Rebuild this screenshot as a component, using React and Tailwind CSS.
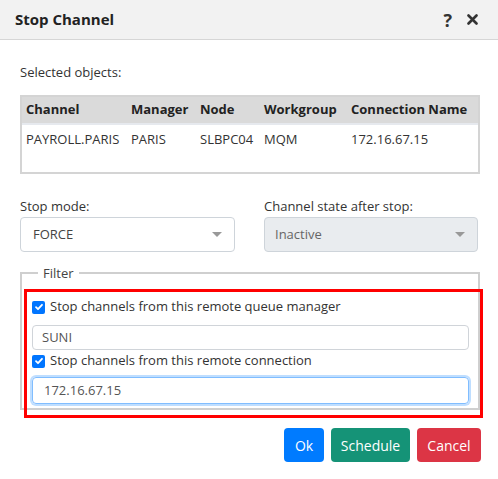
import React from "react";

const font = { fontFamily: '"Open Sans", "Noto Sans", sans-serif' };

function Caret() {
  return (
    <svg width="10" height="6" viewBox="0 0 10 6" className="shrink-0">
      <path d="M0 0h10L5 5z" fill="#999" />
    </svg>
  );
}

function Check() {
  return (
    <span className="w-[13px] h-[13px] rounded-[2px] bg-[#0075ff] flex items-center justify-center shrink-0">
      <svg width="10" height="10" viewBox="0 0 10 10">
        <path d="M2 5.2l2 2L8 2.8" stroke="#fff" strokeWidth="1.8" fill="none" strokeLinecap="round" strokeLinejoin="round" />
      </svg>
    </span>
  );
}

export default function App() {
  return (
    <div className="w-[498px] h-[479px] bg-white text-[13px] text-[#333]" style={font}>
      {/* Header */}
      <div className="h-10 bg-[#f2f2f2] border-b border-[#d6d6d6] flex items-center justify-between pl-[15px] pr-[20px]">
        <h1 className="text-[15px] font-bold text-[#222]">Stop Channel</h1>
        <div className="flex items-center gap-[15px] text-[#333] font-bold">
          <span className="text-[18px] leading-none">?</span>
          <svg width="11" height="11" viewBox="0 0 11 11">
            <path d="M1.5 1.5l8 8M9.5 1.5l-8 8" stroke="#333" strokeWidth="2.6" strokeLinecap="round" />
          </svg>
        </div>
      </div>

      <div className="px-5 pt-[22px]">
        <p className="leading-5">Selected objects:</p>

        {/* Table */}
        <div className="mt-[13px] w-[460px] h-[79px] border-2 border-[#d4d4d4]">
          <div className="h-[28px] bg-[#dadada] border-b-2 border-[#e6e9ee] flex items-center font-bold text-[#222] pl-[4px]">
            <span className="w-[105px]">Channel</span>
            <span className="w-[69px]">Manager</span>
            <span className="w-[64px]">Node</span>
            <span className="w-[87px]">Workgroup</span>
            <span>Connection Name</span>
          </div>
          <div className="h-[30px] flex items-center pl-[4px]">
            <span className="w-[105px]">PAYROLL.PARIS</span>
            <span className="w-[69px]">PARIS</span>
            <span className="w-[64px]">SLBPC04</span>
            <span className="w-[87px]">MQM</span>
            <span>172.16.67.15</span>
          </div>
        </div>

        {/* Selects */}
        <div className="mt-[22px] flex gap-[29px]">
          <div className="w-[216px]">
            <p className="leading-5">Stop mode:</p>
            <div className="mt-[1px] h-[35px] border border-[#ced4da] rounded-[4px] flex items-center justify-between pl-[12px] pr-[12px]">
              <span className="text-[#444]">FORCE</span>
              <Caret />
            </div>
          </div>
          <div className="w-[215px]">
            <p className="leading-5">Channel state after stop:</p>
            <div className="mt-[1px] h-[35px] border border-[#ced4da] bg-[#e9ecef] rounded-[4px] flex items-center justify-between pl-[10px] pr-[12px]">
              <span className="text-[#666]">Inactive</span>
              <Caret />
            </div>
          </div>
        </div>

        {/* Filter */}
        <fieldset className="mt-[11px] w-[460px] h-[147px] border-2 border-[#cfcfcf] px-0">
          <legend className="ml-[16px] px-[5px] leading-5 text-[#444]">Filter</legend>
          <div className="ml-[2px] -mr-[5px] mt-[6px] h-[129px] border-[3px] border-[#ff0000] pl-[5px] pr-[11px] pt-[6px]">
            <label className="flex items-center gap-[5px] h-[18px]">
              <Check />
              <span>Stop channels from this remote queue manager</span>
            </label>
            <div className="mt-[9px] h-[25px] border border-[#d0d4d9] rounded-[4px] flex items-center pl-[9px] text-[#555]">
              SUNI
            </div>
            <label className="mt-[2px] flex items-center gap-[5px] h-[18px]">
              <Check />
              <span>Stop channels from this remote connection</span>
            </label>
            <div className="mt-[7px] h-[27px] border border-[#80bdff] rounded-[4px] shadow-[0_0_0_2px_rgba(0,123,255,0.25)] flex items-center pl-[11px] text-[#555]">
              172.16.67.15
            </div>
          </div>
        </fieldset>

        {/* Buttons */}
        <div className="mt-[18px] flex justify-end gap-[7px] -mr-[3px]">
          <button className="h-[34px] w-[40px] rounded-[4px] bg-[#007bff] text-white text-[14px]">Ok</button>
          <button className="h-[34px] w-[79px] rounded-[4px] bg-[#159377] text-white text-[14px]">Schedule</button>
          <button className="h-[34px] w-[64px] rounded-[4px] bg-[#dc3545] text-white text-[14px]">Cancel</button>
        </div>
      </div>
    </div>
  );
}
